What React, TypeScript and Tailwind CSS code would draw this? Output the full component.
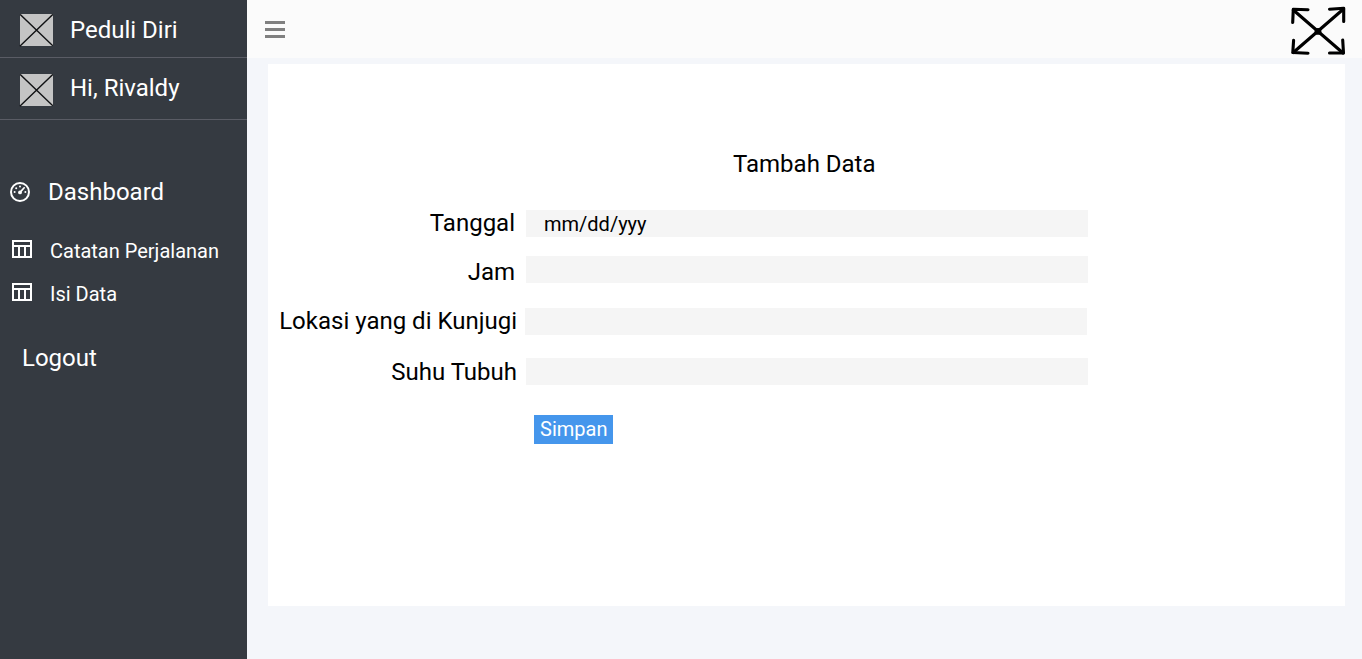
import React from "react";

function Placeholder() {
  return (
    <svg width="34" height="33" viewBox="0 0 34 33" className="shrink-0" aria-hidden="true">
      <rect x="1" y="0" width="33" height="32" rx="1" fill="#c4c4c4" />
      <path d="M1.2 0.4L33.8 31.8M33.8 0.4L0.8 32.2" stroke="#111214" strokeWidth="1.35" fill="none" />
    </svg>
  );
}

function GaugeIcon() {
  return (
    <svg width="20" height="20" viewBox="0 0 20 20" fill="none" className="shrink-0" aria-hidden="true">
      <circle cx="10" cy="10" r="9" stroke="#fff" strokeWidth="2" />
      <g fill="#fff">
        <circle cx="4.6" cy="10" r="1" />
        <circle cx="6.2" cy="6.2" r="1" />
        <circle cx="10" cy="4.6" r="1" />
        <circle cx="15.4" cy="10" r="1" />
        <circle cx="10" cy="10.4" r="1.9" />
      </g>
      <path d="M10 10.4L14.2 5.8" stroke="#fff" strokeWidth="1.7" strokeLinecap="round" />
    </svg>
  );
}

function TableIcon() {
  return (
    <svg width="20" height="18" viewBox="0 0 20 18" className="shrink-0" aria-hidden="true">
      <path
        fill="#fff"
        fillRule="evenodd"
        d="M0 0H20V18H0ZM2 2V5H18V2ZM2 7V16H6V7ZM8 7V16H12V7ZM14 7V16H18V7Z"
      />
    </svg>
  );
}

function ExpandIcon() {
  return (
    <svg
      width="56"
      height="50"
      viewBox="0 0 56 50"
      fill="none"
      stroke="#000"
      strokeWidth="3.1"
      strokeLinecap="round"
      strokeLinejoin="round"
      aria-hidden="true"
    >
      <path d="M3.3 4L53 47M53.5 3L3.3 46.5" />
      <path d="M18 3.8L3.3 3.3L2.7 16.5M39.5 3.2L53.7 2.2V15.5M3.6 34.3L2.8 46.5L18 47.2M52.7 34L53.5 47H39.5" />
      <circle cx="28" cy="25.4" r="1.9" fill="#000" />
    </svg>
  );
}

type FieldProps = {
  label: string;
  row: string;
  labelBox: string;
  input: string;
  value?: string;
};

const fields: FieldProps[] = [
  { label: "Tanggal", row: "mt-[31px]", labelBox: "w-[247px]", input: "mt-px ml-[11px]", value: "mm/dd/yyy" },
  { label: "Jam", row: "mt-[19px]", labelBox: "w-[247px] pt-0.5", input: "ml-[11px]" },
  { label: "Lokasi yang di Kunjugi", row: "mt-[23px]", labelBox: "w-[249px]", input: "mt-px ml-2" },
  { label: "Suhu Tubuh", row: "mt-[23px]", labelBox: "w-[249px]", input: "ml-[9px]" },
];

function Field({ label, row, labelBox, input, value }: FieldProps) {
  return (
    <div className={`flex h-7 items-start ${row}`}>
      <div className={`shrink-0 text-right whitespace-nowrap ${labelBox}`}>{label}</div>
      <div className={`h-[27px] w-[562px] shrink-0 bg-[#f5f5f5] pt-[3px] pl-[18px] text-xl leading-[23px] ${input}`}>
        {value}
      </div>
    </div>
  );
}

export default function App() {
  return (
    <div className="flex h-[659px] w-[1362px] overflow-hidden bg-[#f4f6fa] font-['Roboto',sans-serif] text-2xl leading-7 text-black">
      <aside className="w-[247px] shrink-0 bg-[#353a41] text-white">
        <div className="flex h-[58px] items-start border-b border-[#5a5c65] pt-3.5 pl-[19px]">
          <Placeholder />
          <span className="mt-0.5 ml-[17px]">Peduli Diri</span>
        </div>
        <div className="flex h-[62px] items-start border-b border-[#5a5c65] pt-4 pl-[19px]">
          <Placeholder />
          <span className="ml-[17px]">Hi, Rivaldy</span>
        </div>
        <nav>
          <a className="mt-[58px] flex items-center pl-2.5">
            <GaugeIcon />
            <span className="ml-[18px]">Dashboard</span>
          </a>
          <a className="mt-[34px] flex items-start pl-3 text-xl leading-[23px]">
            <TableIcon />
            <span className="ml-[18px]">Catatan Perjalanan</span>
          </a>
          <a className="mt-5 flex items-start pl-3 text-xl leading-[23px]">
            <TableIcon />
            <span className="ml-[18px]">Isi Data</span>
          </a>
          <a className="mt-[38px] block pl-[22px]">Logout</a>
        </nav>
      </aside>

      <main className="flex min-w-0 flex-1 flex-col">
        <header className="flex h-[58px] items-start justify-between bg-[#fbfbfb] pr-4 pl-[18px]">
          <div className="mt-[21px] flex w-5 flex-col gap-1">
            <div className="h-[3px] bg-[#808080]" />
            <div className="h-[3px] bg-[#808080]" />
            <div className="h-[3px] bg-[#808080]" />
          </div>
          <div className="mt-[6px]">
            <ExpandIcon />
          </div>
        </header>

        <section className="mt-1.5 ml-[21px] h-[542px] w-[1077px] bg-white pt-[86px]">
          <h1 className="pl-[465px]">Tambah Data</h1>
          {fields.map((field) => (
            <Field key={field.label} {...field} />
          ))}
          <button className="mt-[29px] ml-[266px] block h-[29px] w-[79px] bg-[#4596ec] pl-[6px] text-left text-xl leading-[23px] text-white">
            Simpan
          </button>
        </section>
      </main>
    </div>
  );
}
